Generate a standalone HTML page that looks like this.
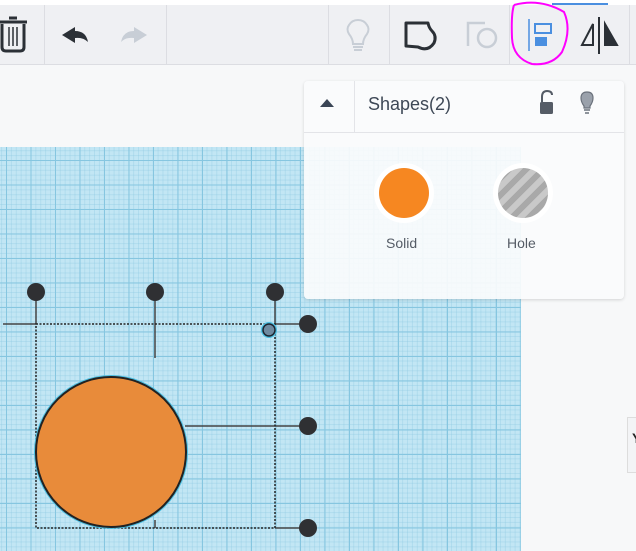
<!DOCTYPE html>
<html><head><meta charset="utf-8"><style>
*{margin:0;padding:0;box-sizing:border-box}
body{width:636px;height:551px;overflow:hidden;background:#f7f8f9;font-family:"Liberation Sans",sans-serif;position:relative}
.tb{position:absolute;left:0;top:5px;width:636px;height:60px;background:#eff0f3;border-bottom:1px solid #dcdde2}
.top{position:absolute;left:0;top:0;width:636px;height:5px;background:#fff}
.sep{position:absolute;top:5px;width:1px;height:60px;background:#dcdde2}
.grid{position:absolute;left:0;top:147px;width:521px;height:404px;background-color:#c2e6f4;
background-image:linear-gradient(#86c6e0 1px,transparent 1px),linear-gradient(90deg,#86c6e0 1px,transparent 1px),linear-gradient(rgba(140,200,225,.35) 1px,transparent 1px),linear-gradient(90deg,rgba(140,200,225,.35) 1px,transparent 1px);
background-size:24.5px 24.5px,24.5px 24.5px,4.9px 4.9px,4.9px 4.9px;background-position:6px 13px,6px 13px,6px 13px,6px 13px}
.panel{position:absolute;left:304px;top:81px;width:320px;height:218px;background:rgba(250,251,252,.93);border-radius:4px;box-shadow:0 1px 3px rgba(0,0,0,.15)}
</style></head><body>
<div class="top"></div><div style="position:absolute;left:552px;top:3px;width:56px;height:2px;background:#4a8fe0"></div>
<div class="tb"></div>
<div class="sep" style="left:44px"></div><div class="sep" style="left:166px"></div><div class="sep" style="left:328px"></div><div class="sep" style="left:389px"></div><div class="sep" style="left:509px"></div><div class="sep" style="left:629px"></div>
<svg style="position:absolute;left:0;top:0" width="636" height="66">
<g fill="none" stroke="#2b3036" stroke-width="3"><path d="M0 22H27"/><path d="M2 24V47Q2 51 6 51H20Q24 51 24 47V24"/><path d="M9 18H17"/></g>
<g stroke="#2b3036" stroke-width="1.5"><path d="M9 27V46M13 27V46M17 27V46"/></g>
<path d="M62 35L75 27V31Q86 31 88 42Q83 37 75 38V43Z" fill="#2b3036"/>
<path d="M147 35L134 27V31Q123 31 121 42Q126 37 134 38V43Z" fill="#c8ced6"/>
<g fill="none" stroke="#c8ced6" stroke-width="2"><path d="M353 44Q353 39 349 34Q346 29 349 25Q352 20 358 20Q364 20 367 25Q370 29 367 34Q363 39 363 44Z"/><path d="M353 47H363M354 50H362"/></g>
<path d="M406 23H428Q429 28 432 31Q437 36 434 43Q428 52 418 47L406 46Z" fill="none" stroke="#2b3036" stroke-width="3" stroke-linejoin="round"/>
<g fill="none" stroke="#c8ced6" stroke-width="2.5"><path d="M468 46V23H485"/><circle cx="487" cy="38" r="9"/></g>
<g><path d="M529 19V51" stroke="#4a8fe0" stroke-width="1.5"/><rect x="535" y="24" width="16" height="9" fill="none" stroke="#4a8fe0" stroke-width="2"/><rect x="535" y="37" width="12" height="9" fill="#4a8fe0"/></g>
<path d="M514 5Q540 -2 564 12Q572 30 562 52Q552 66 532 64Q513 58 512 38Q511 14 514 5" fill="none" stroke="#ff00ff" stroke-width="2"/>
<g stroke="#2b3036" fill="none" stroke-width="2"><path d="M599 17V54"/><path d="M593 24L582 45H593Z"/><path d="M605 24V45H617Z" fill="#2b3036"/></g>
</svg>
<div class="grid"></div>
<svg style="position:absolute;left:0;top:270px" width="636" height="281">
<g stroke="#444" stroke-width="1.5" fill="none">
<path d="M3 54H36M36 24V54M155 24V88M155 250V258M275 24V54M275 54H308M185 156H308M275 258H308"/>
</g>
<path d="M36 54H275V258H36Z" fill="none" stroke="#222" stroke-width="1.5" stroke-dasharray="2,1.5"/>
<ellipse cx="111" cy="182" rx="77" ry="77" fill="#49bde0"/>
<ellipse cx="111" cy="182" rx="75" ry="75" fill="#e88b3a" stroke="#222" stroke-width="2"/>
<g fill="#2f3033"><circle cx="36" cy="22" r="9"/><circle cx="155" cy="22" r="9"/><circle cx="275" cy="22" r="9"/><circle cx="308" cy="54" r="9"/><circle cx="308" cy="156" r="9"/><circle cx="308" cy="258" r="9"/></g>
<circle cx="269" cy="60" r="8" fill="#49bde0"/><circle cx="269" cy="60" r="6" fill="#6f8aa0" stroke="#1e2530" stroke-width="1.5"/>
</svg>
<div style="position:absolute;left:627px;top:417px;width:9px;height:56px;background:#f3f4f6;border:1px solid #ddd;border-right:none"></div>
<div style="position:absolute;left:632px;top:430px;font-size:14px;color:#222;font-weight:bold">Y</div>
<div class="panel">
<div style="position:absolute;left:50px;top:0;width:1px;height:51px;background:#e3e4e8"></div>
<div style="position:absolute;left:0;top:51px;width:320px;height:1px;background:#e3e4e8"></div>
<svg style="position:absolute;left:14px;top:16px" width="20" height="12"><path d="M2 10L9 2L16 10Z" fill="#3a4555"/></svg>
<div style="position:absolute;left:64px;top:13px;font-size:18px;color:#3e4856">Shapes(2)</div>
<svg style="position:absolute;left:236px;top:9px" width="60" height="30"><path d="M2 12V7Q2 1 7 1Q12 1 12 5" fill="none" stroke="#555c66" stroke-width="2"/><rect x="0" y="12" width="13" height="12" rx="1.5" fill="#555c66"/>
<path d="M44 16Q41 12 41 8Q41 2 47 2Q53 2 53 8Q53 12 50 16V18H44Z" fill="#9aa1ab" stroke="#6b727c" stroke-width="1.2"/><path d="M44 20H50M45 23H49" stroke="#6b727c" stroke-width="1.5"/></svg>
<div style="position:absolute;left:70px;top:82px;width:60px;height:60px;border-radius:50%;background:#fff"></div>
<div style="position:absolute;left:75px;top:87px;width:50px;height:50px;border-radius:50%;background:#f68721"></div>
<div style="position:absolute;left:82px;top:154px;font-size:14px;color:#555c66">Solid</div>
<div style="position:absolute;left:189px;top:82px;width:60px;height:60px;border-radius:50%;background:#fff"></div>
<div style="position:absolute;left:194px;top:87px;width:50px;height:50px;border-radius:50%;background:repeating-linear-gradient(135deg,#c9c9c9 0 6px,#a9a9a9 6px 12px)"></div>
<div style="position:absolute;left:203px;top:154px;font-size:14px;color:#555c66">Hole</div>
</div>
</body></html>
